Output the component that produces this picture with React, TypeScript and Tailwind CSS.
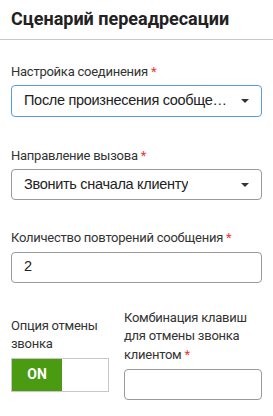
import React from "react";

function Caret() {
  return (
    <svg width="8" height="4" viewBox="0 0 8 4" className="shrink-0">
      <path d="M0 0h8L4 4z" fill="#333" />
    </svg>
  );
}

function Label({ children, required }: { children: React.ReactNode; required?: boolean }) {
  return (
    <div className="text-[13px] leading-[18.5px] tracking-[-0.25px] text-[#333]">
      {children}
      {required && <span className="text-[#e53935]"> *</span>}
    </div>
  );
}

export default function App() {
  return (
    <div className="w-[273px] h-[416px] bg-white font-['Roboto',sans-serif] overflow-hidden">
      {/* Header */}
      <div className="pt-[9px] pb-[10px] pl-[11px] border-b border-[#c8c8c8]">
        <h2 className="text-[18px] leading-[20px] font-bold text-[#222]">Сценарий переадресации</h2>
      </div>

      <div className="px-[11px]">
        {/* Connection setting */}
        <div className="mt-[23px]">
          <Label required>Настройка соединения</Label>
          <div className="mt-[3px] h-[32px] border border-[#5a9be0] rounded-[4px] flex items-center justify-between pl-[12px] pr-[12px]">
            <span className="font-['Liberation_Sans',sans-serif] text-[14.5px] tracking-[-0.3px] text-[#222] whitespace-nowrap">После произнесения сообще…</span>
            <Caret />
          </div>
        </div>

        {/* Direction */}
        <div className="mt-[30px]">
          <Label required>Направление вызова</Label>
          <div className="mt-[4px] h-[31px] border border-[#9a9a9a] rounded-[4px] flex items-center justify-between pl-[12px] pr-[12px]">
            <span className="font-['Liberation_Sans',sans-serif] text-[14.5px] tracking-[-0.3px] text-[#222] truncate">Звонить сначала клиенту</span>
            <Caret />
          </div>
        </div>

        {/* Repeat count */}
        <div className="mt-[29px]">
          <Label required>Количество повторений сообщения</Label>
          <div className="mt-[4px] h-[31px] border border-[#9a9a9a] rounded-[4px] flex items-center pl-[12px]">
            <span className="font-['Liberation_Sans',sans-serif] text-[14.5px] text-[#222]">2</span>
          </div>
        </div>

        {/* Bottom row */}
        <div className="mt-[26px] flex gap-[15px]">
          <div className="w-[98px] pt-[8px]">
            <Label>
              Опция отмены
              <br />
              звонка
            </Label>
            <div className="mt-[4px] h-[34px] border border-[#c8c8c8] flex">
              <div className="w-[50px] bg-[#4a9a12] flex items-center justify-center text-white text-[14px] font-bold">
                ON
              </div>
            </div>
          </div>
          <div className="w-[138px]">
            <Label required>
              Комбинация клавиш
              <br />
              для отмены звонка
              <br />
              клиентом
            </Label>
            <div className="mt-[5px] h-[31px] border border-[#9a9a9a] rounded-[4px]" />
          </div>
        </div>
      </div>
    </div>
  );
}
